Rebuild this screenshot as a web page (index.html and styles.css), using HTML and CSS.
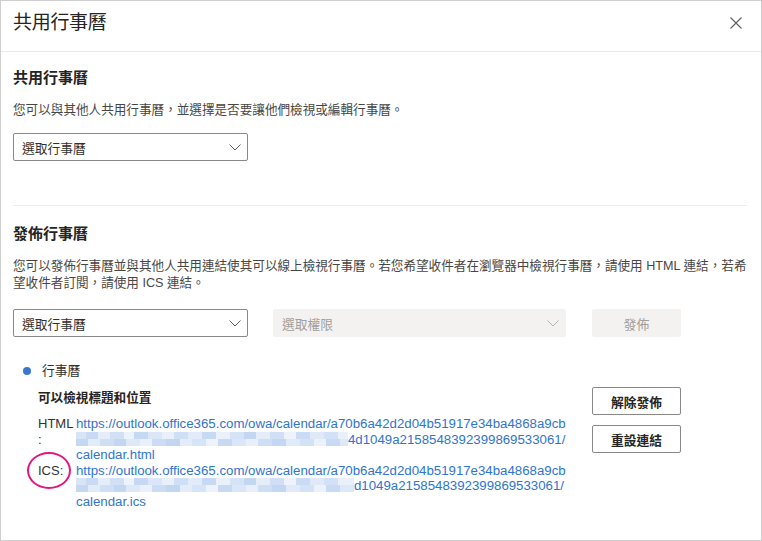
FILE: index.html
```html
<!DOCTYPE html>
<html lang="zh-Hant">
<head>
<meta charset="utf-8">
<title>共用行事曆</title>
<link rel="stylesheet" href="styles.css">
</head>
<body>
<div class="dialog">
  <header class="dlg-header">
    <h1 class="dlg-title">共用行事曆</h1>
    <button class="close" aria-label="關閉">
      <svg width="12" height="12" viewBox="0 0 12 12"><path d="M0.5 0.5 L11.5 11.5 M11.5 0.5 L0.5 11.5" stroke="#605e5c" stroke-width="1.1" fill="none"/></svg>
    </button>
  </header>
  <div class="dlg-body">
    <section class="sec">
      <h2 class="sec-title">共用行事曆</h2>
      <p class="desc">您可以與其他人共用行事曆，並選擇是否要讓他們檢視或編輯行事曆。</p>
      <div class="dropdown share-dd">
        <span class="dd-text">選取行事曆</span>
        <svg class="chev" width="12" height="7" viewBox="0 0 12 7"><path d="M0.5 0.5 L6 6 L11.5 0.5" stroke="#605e5c" stroke-width="1" fill="none"/></svg>
      </div>
    </section>
    <hr class="divider">
    <section class="sec">
      <h2 class="sec-title">發佈行事曆</h2>
      <p class="desc desc-2">您可以發佈行事曆並與其他人共用連結使其可以線上檢視行事曆。若您希望收件者在瀏覽器中檢視行事曆，請使用 HTML 連結，若希望收件者訂閱，請使用 ICS 連結。</p>
      <div class="publish-row">
        <div class="dropdown cal-dd">
          <span class="dd-text">選取行事曆</span>
          <svg class="chev" width="12" height="7" viewBox="0 0 12 7"><path d="M0.5 0.5 L6 6 L11.5 0.5" stroke="#605e5c" stroke-width="1" fill="none"/></svg>
        </div>
        <div class="dropdown perm-dd disabled">
          <span class="dd-text">選取權限</span>
          <svg class="chev" width="12" height="7" viewBox="0 0 12 7"><path d="M0.5 0.5 L6 6 L11.5 0.5" stroke="#b3b0ad" stroke-width="1" fill="none"/></svg>
        </div>
        <button class="btn-publish" disabled>發佈</button>
      </div>
      <div class="item">
        <div class="item-head"><span class="dot"></span><span class="item-name">行事曆</span></div>
        <div class="item-body">
          <div class="links">
            <div class="perm-title">可以檢視標題和位置</div>
            <div class="link-row">
              <span class="label">HTML<wbr>:</span>
              <div class="url">
                <span class="url-line">https://outlook.office365.com/owa/calendar/a70b6a42d2d04b51917e34ba4868a9cb</span>
                <span class="url-line"><span class="blur b1"></span>4d1049a2158548392399869533061/</span>
                <span class="url-line">calendar.html</span>
              </div>
            </div>
            <div class="link-row">
              <span class="label ics">ICS:<span class="ring"></span></span>
              <div class="url">
                <span class="url-line">https://outlook.office365.com/owa/calendar/a70b6a42d2d04b51917e34ba4868a9cb</span>
                <span class="url-line"><span class="blur b2"></span>d1049a2158548392399869533061/</span>
                <span class="url-line">calendar.ics</span>
              </div>
            </div>
          </div>
          <div class="actions">
            <button class="btn">解除發佈</button>
            <button class="btn">重設連結</button>
          </div>
        </div>
      </div>
    </section>
  </div>
</div>
</body>
</html>
```

FILE: styles.css
```css
* { box-sizing: border-box; }

html, body {
  margin: 0;
  padding: 0;
  background: #ffffff;
}

body {
  font-family: "Liberation Sans", "Noto Sans CJK TC", sans-serif;
  color: #323130;
  font-size: 13px;
}

.dialog {
  width: 762px;
  height: 541px;
  border: 1px solid #cfcfcf;
  background: #fff;
  overflow: hidden;
}

.dlg-header {
  height: 51px;
  border-bottom: 1px solid #e8e8e8;
  display: flex;
  align-items: flex-start;
  padding: 10px 19px 0 12px;
}

.dlg-title {
  margin: 0;
  font-size: 19px;
  letter-spacing: -0.3px;
  font-weight: 400;
  line-height: 24px;
  color: #252423;
}

.close {
  margin-left: auto;
  margin-top: 6px;
  width: 12px;
  height: 12px;
  padding: 0;
  border: 0;
  background: transparent;
  display: flex;
}

.dlg-body {
  padding: 0 14px 0 12px;
}

.sec-title {
  margin: 16px 0 0;
  font-size: 15px;
  line-height: 20px;
  font-weight: 700;
  color: #252423;
}

.desc {
  margin: 13px 0 0;
  font-size: 12.6px;
  line-height: 18px;
  color: #484644;
}

.desc-2 {
  margin-top: 14px;
  line-height: 17px;
}

.dropdown {
  height: 28px;
  border: 1px solid #8a8886;
  border-radius: 2px;
  display: flex;
  align-items: center;
  padding: 0 6px 0 8px;
  background: #fff;
}

.dd-text {
  flex: 1;
  font-size: 12.75px;
  color: #323130;
}

.chev { display: block; }

.share-dd {
  width: 235px;
  margin-top: 14px;
}

.divider {
  border: 0;
  border-top: 1px solid #efedeb;
  margin: 44px 0 0;
  height: 0;
}

.divider + .sec .sec-title { margin-top: 18px; }

.publish-row {
  display: flex;
  margin-top: 17px;
}

.cal-dd { width: 235px; }

.perm-dd {
  width: 293px;
  margin-left: 25px;
}

.dropdown.disabled {
  background: #f3f2f1;
  border-color: #f3f2f1;
}

.dropdown.disabled .dd-text { color: #a19f9d; }

.btn-publish {
  width: 89px;
  height: 28px;
  margin-left: 26px;
  border: 0;
  border-radius: 2px;
  background: #f3f2f1;
  color: #a19f9d;
  font-family: inherit;
  font-size: 13px;
}

.item { margin-top: 25px; }

.item-head {
  display: flex;
  align-items: center;
  line-height: 18px;
  padding-left: 10px;
}

.dot {
  width: 8px;
  height: 8px;
  border-radius: 50%;
  background: #3a78cf;
}

.item-name {
  margin-left: 11px;
  font-size: 12.75px;
}

.item-body {
  display: flex;
  margin-top: 9px;
  padding-left: 25px;
}

.links { width: 554px; }

.perm-title {
  font-weight: 700;
  line-height: 18px;
  font-size: 12.6px;
  color: #252423;
}

.link-row {
  display: flex;
  line-height: 15.5px;
}

.perm-title + .link-row { margin-top: 9px; }

.label {
  width: 38px;
  flex: none;
  color: #323130;
  position: relative;
}

.ring {
  position: absolute;
  left: -11px;
  top: -11px;
  width: 44px;
  height: 37px;
  border: 2px solid #e2187e;
  border-radius: 50%;
}

.url {
  color: #2f74d0;
  font-size: 13.25px;
}

.url-line {
  display: block;
  white-space: nowrap;
}

.blur {
  display: inline-block;
  height: 14px;
  vertical-align: -2px;
  background:
    linear-gradient(90deg, #d8e5f7 0 10px, #c9dbf4 10px 22px, #e4edf9 22px 34px, #d1e0f5 34px 48px, #edf3fb 48px 58px, #c6d9f3 58px 72px, #dbe7f8 72px 86px, #e8f0fa 86px 98px, #cfdff5 98px 112px, #e1ebf9 112px 126px, #c8daf3 126px 140px, #eaf1fb 140px 154px, #d5e3f6 154px 168px, #c4d7f2 168px 180px, #e5edf9 180px 194px, #d0dff5 194px 208px, #eef3fb 208px 220px, #cadcf4 220px 234px, #dfe9f8 234px 248px, #d3e1f6 248px 262px, #e9f0fa 262px 280px) top / 100% 7px no-repeat,
    linear-gradient(90deg, #c5d8f2 0 12px, #e2ebf9 12px 24px, #d0dff5 24px 38px, #c3d6f2 38px 50px, #dde8f8 50px 64px, #eaf1fb 64px 76px, #cbdcf4 76px 90px, #c2d5f1 90px 104px, #e3ecf9 104px 116px, #d6e4f7 116px 130px, #eef3fb 130px 142px, #c7d9f3 142px 156px, #dbe6f8 156px 170px, #e8effa 170px 182px, #cedef5 182px 196px, #c4d7f2 196px 210px, #e0eaf8 210px 224px, #d4e2f6 224px 238px, #ecf2fb 238px 250px, #c9dbf4 250px 264px, #dde8f8 264px 280px) bottom / 100% 7px no-repeat;
}

.b1 { width: 272px; }
.b2 { width: 278px; }

.actions {
  display: flex;
  flex-direction: column;
  gap: 10px;
  margin-top: -2px;
}

.btn {
  width: 89px;
  height: 28px;
  border: 1px solid #8a8886;
  border-radius: 2px;
  background: #fff;
  color: #252423;
  font-family: inherit;
  font-size: 12.75px;
  font-weight: 700;
  padding: 0;
}
```
